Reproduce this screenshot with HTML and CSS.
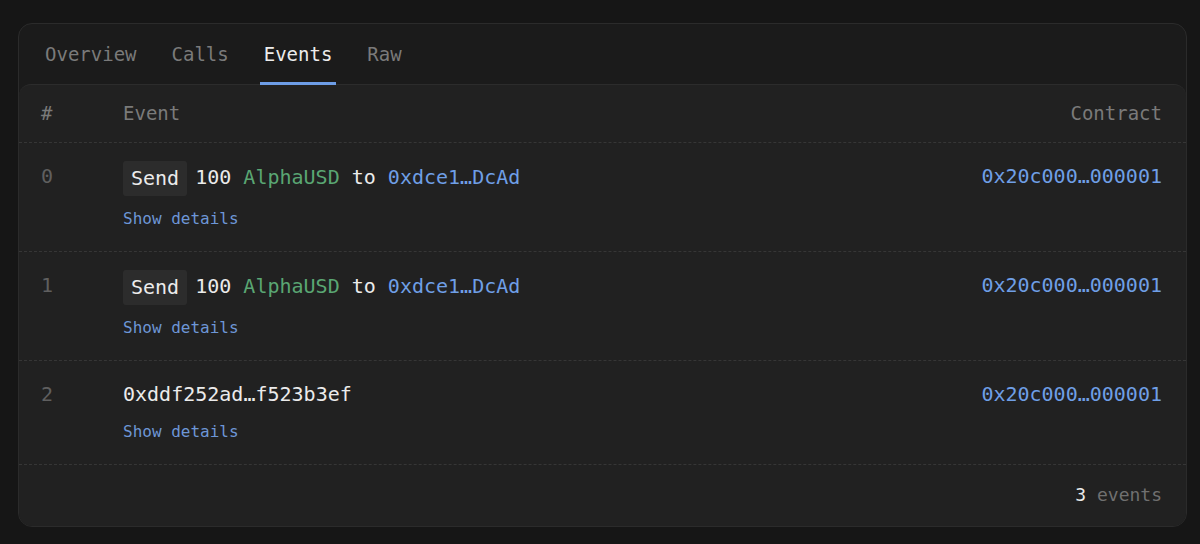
FILE: index.html
```html
<!DOCTYPE html>
<html lang="en">
<head>
<meta charset="utf-8">
<title>Events</title>
<link rel="stylesheet" href="styles.css">
</head>
<body>
<div class="card">
  <nav class="tabs">
    <span class="tab">Overview</span>
    <span class="tab">Calls</span>
    <span class="tab active">Events</span>
    <span class="tab">Raw</span>
  </nav>
  <div class="panel">
    <div class="grid thead">
      <div class="hcell">#</div>
      <div class="hcell">Event</div>
      <div class="hcell right">Contract</div>
    </div>
    <div class="grid event">
      <div class="idx">0</div>
      <div class="body">
        <div class="line"><span class="badge">Send</span>100 <span class="token">AlphaUSD</span> to <span class="addr">0xdce1…DcAd</span></div>
        <a class="details">Show details</a>
      </div>
      <div class="contract">0x20c000…000001</div>
    </div>
    <div class="grid event">
      <div class="idx">1</div>
      <div class="body">
        <div class="line"><span class="badge">Send</span>100 <span class="token">AlphaUSD</span> to <span class="addr">0xdce1…DcAd</span></div>
        <a class="details">Show details</a>
      </div>
      <div class="contract">0x20c000…000001</div>
    </div>
    <div class="grid event">
      <div class="idx">2</div>
      <div class="body">
        <div class="line">0xddf252ad…f523b3ef</div>
        <a class="details">Show details</a>
      </div>
      <div class="contract">0x20c000…000001</div>
    </div>
    <div class="footer"><span class="count">3</span> events</div>
  </div>
</div>
</body>
</html>
```
FILE: styles.css
```css
html, body {
  margin: 0;
  background: #161616;
}
body {
  padding: 23px 13px 0 18px;
  font-family: "DejaVu Sans Mono", "Liberation Mono", monospace;
  color: #ebebeb;
}
.card {
  background: #1b1b1b;
  border: 1px solid #2b2b2b;
  border-radius: 14px;
  overflow: hidden;
}
.tabs {
  display: flex;
  gap: 27px;
  padding: 0 22px;
}
.tab {
  font-size: 19px;
  line-height: 22px;
  padding: 19px 4px 17px;
  border-bottom: 3px solid transparent;
  color: #7a7a7a;
  margin-bottom: -1px;
  position: relative;
  z-index: 1;
}
.tab.active {
  color: #ececec;
  border-bottom-color: #6d9de6;
}
.panel {
  background: #212121;
  border-top: 1px solid #2c2c2c;
  border-radius: 12px 12px 0 0;
}
.grid {
  display: grid;
  grid-template-columns: 82px 1fr auto;
  padding: 0 24px 0 22px;
  border-bottom: 1px dashed #363636;
}
.thead {
  padding-top: 17px;
  padding-bottom: 18px;
}
.hcell {
  font-size: 19px;
  line-height: 22px;
  color: #7a7a7a;
}
.right {
  text-align: right;
}
.event {
  padding-top: 18px;
  padding-bottom: 22px;
}
.idx {
  font-size: 20px;
  line-height: 30px;
  color: #5f5f5f;
}
.line {
  font-size: 20px;
  line-height: 30px;
  color: #ebebeb;
  white-space: nowrap;
}
.badge {
  display: inline-block;
  vertical-align: middle;
  line-height: 23px;
  padding: 6px 8px;
  margin-right: 8px;
  background: #2c2c2c;
  border-radius: 3px;
}
.token {
  color: #5aa673;
}
.addr {
  color: #6f9fe6;
}
.details {
  display: block;
  margin-top: 13px;
  font-size: 16px;
  line-height: 20px;
  color: #6d96d6;
}
.contract {
  font-size: 20px;
  line-height: 30px;
  color: #6f9fe6;
  text-align: right;
}
.footer {
  padding: 19px 24px 20px;
  text-align: right;
  font-size: 18px;
  line-height: 22px;
  color: #707070;
}
.count {
  color: #ebebeb;
}
```
